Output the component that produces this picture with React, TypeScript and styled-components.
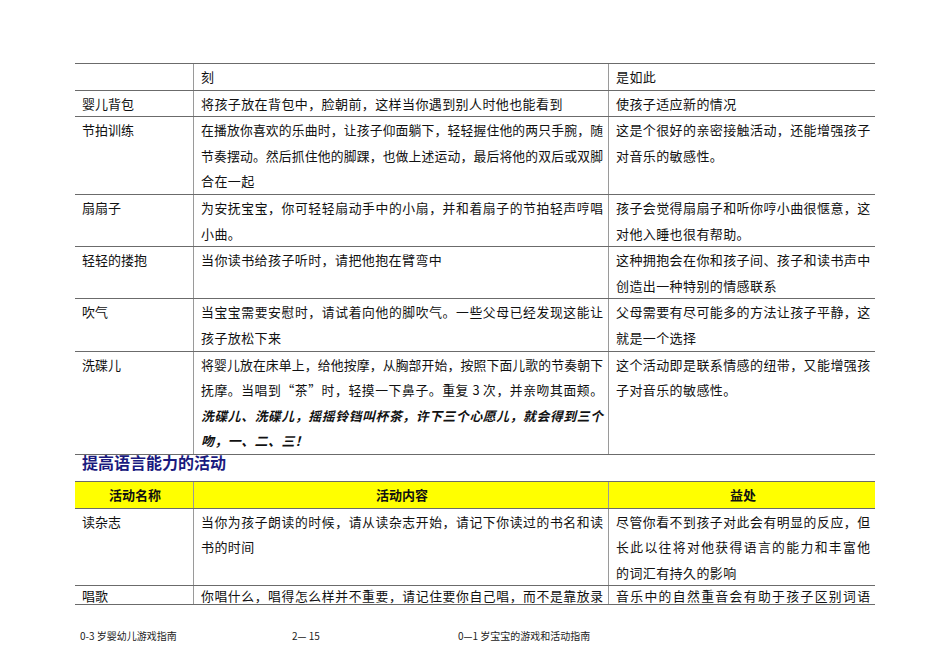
import React from "react";
import styled, { createGlobalStyle } from "styled-components";

const GlobalStyle = createGlobalStyle`
  html, body { margin: 0; padding: 0; background: #ffffff; }
  body { font-family: "Noto Sans CJK SC", "Liberation Sans", sans-serif; color: #111; }
`;

const COLS = "118px 415px 267px";

const Page = styled.div`
  width: 950px;
  height: 672px;
  box-sizing: border-box;
  padding: 63px 0 0 75px;
  overflow: hidden;
`;

const Table = styled.div`
  width: 800px;
  border-top: 1px solid #6b6b6b;
`;

const Row = styled.div<{ $head?: boolean }>`
  display: grid;
  grid-template-columns: ${COLS};
  border-bottom: 1px solid #6b6b6b;
  background: ${(p) => (p.$head ? "#ffff00" : "transparent")};
`;

const Cell = styled.div<{ $divider?: boolean; $head?: boolean; $clip?: boolean }>`
  padding: ${(p) => (p.$clip ? "1px 5px 0 7px" : "0 5px 0 7px")};
  border-left: ${(p) => (p.$divider ? "1px solid #9a9a9a" : "none")};
  font-size: 13px;
  line-height: ${(p) => (p.$clip ? "17px" : "25.6px")};
  text-align: ${(p) => (p.$head ? "center" : "left")};
  font-weight: ${(p) => (p.$head ? 700 : 400)};
`;

const Line = styled.div<{ $full?: boolean; $em?: boolean }>`
  white-space: nowrap;
  letter-spacing: ${(p) => (p.$full ? "0" : "0.4px")};
  font-size: ${(p) => (p.$full ? "12.8px" : "13px")};
  text-align: ${(p) => (p.$full ? "justify" : "left")};
  text-align-last: ${(p) => (p.$full ? "justify" : "left")};
  font-style: ${(p) => (p.$em ? "italic" : "normal")};
  font-weight: ${(p) => (p.$em ? 700 : "inherit")};
`;

const Heading = styled.h2`
  margin: 0;
  height: 26px;
  padding-left: 7px;
  font-size: 16px;
  line-height: 15px;
  font-weight: 700;
  color: #1a1a7e;
  font-family: "Noto Sans CJK SC", "Liberation Sans", sans-serif;
`;

const Footer = styled.div`
  display: grid;
  grid-template-columns: 212px 166px auto;
  padding: 24px 0 0 5px;
  font-size: 10px;
  line-height: 14px;
  color: #222;
`;

type L = { t: string; full?: boolean; em?: boolean };
type RowData = { name: string; content: L[]; benefit: L[] };

const rows1: RowData[] = [
  { name: "", content: [{ t: "刻" }], benefit: [{ t: "是如此" }] },
  {
    name: "婴儿背包",
    content: [{ t: "将孩子放在背包中，脸朝前，这样当你遇到别人时他也能看到" }],
    benefit: [{ t: "使孩子适应新的情况" }],
  },
  {
    name: "节拍训练",
    content: [
      { t: "在播放你喜欢的乐曲时，让孩子仰面躺下，轻轻握住他的两只手腕，随", full: true },
      { t: "节奏摆动。然后抓住他的脚踝，也做上述运动，最后将他的双后或双脚", full: true },
      { t: "合在一起" },
    ],
    benefit: [
      { t: "这是个很好的亲密接触活动，还能增强孩子" },
      { t: "对音乐的敏感性。" },
    ],
  },
  {
    name: "扇扇子",
    content: [
      { t: "为安抚宝宝，你可轻轻扇动手中的小扇，并和着扇子的节拍轻声哼唱", full: true },
      { t: "小曲。" },
    ],
    benefit: [
      { t: "孩子会觉得扇扇子和听你哼小曲很惬意，这" },
      { t: "对他入睡也很有帮助。" },
    ],
  },
  {
    name: "轻轻的搂抱",
    content: [{ t: "当你读书给孩子听时，请把他抱在臂弯中" }],
    benefit: [
      { t: "这种拥抱会在你和孩子间、孩子和读书声中" },
      { t: "创造出一种特别的情感联系" },
    ],
  },
  {
    name: "吹气",
    content: [
      { t: "当宝宝需要安慰时，请试着向他的脚吹气。一些父母已经发现这能让", full: true },
      { t: "孩子放松下来" },
    ],
    benefit: [
      { t: "父母需要有尽可能多的方法让孩子平静，这" },
      { t: "就是一个选择" },
    ],
  },
  {
    name: "洗碟儿",
    content: [
      { t: "将婴儿放在床单上，给他按摩，从胸部开始，按照下面儿歌的节奏朝下", full: true },
      { t: "抚摩。当唱到“茶”时，轻摸一下鼻子。重复 3 次，并亲吻其面颊。", full: true },
      { t: "洗碟儿、洗碟儿，摇摇铃铛叫杯茶，许下三个心愿儿，就会得到三个", full: true, em: true },
      { t: "吻，一、二、三！", em: true },
    ],
    benefit: [
      { t: "这个活动即是联系情感的纽带，又能增强孩" },
      { t: "子对音乐的敏感性。" },
    ],
  },
];

const rows2: RowData[] = [
  {
    name: "读杂志",
    content: [
      { t: "当你为孩子朗读的时候，请从读杂志开始，请记下你读过的书名和读", full: true },
      { t: "书的时间" },
    ],
    benefit: [
      { t: "尽管你看不到孩子对此会有明显的反应，但", full: true },
      { t: "长此以往将对他获得语言的能力和丰富他", full: true },
      { t: "的词汇有持久的影响" },
    ],
  },
];

const Lines: React.FC<{ items: L[] }> = ({ items }) => (
  <>
    {items.map((l, i) => (
      <Line key={i} $full={l.full} $em={l.em}>
        {l.t}
      </Line>
    ))}
  </>
);

const DataRow: React.FC<{ r: RowData }> = ({ r }) => (
  <Row>
    <Cell>{r.name}</Cell>
    <Cell $divider>
      <Lines items={r.content} />
    </Cell>
    <Cell $divider>
      <Lines items={r.benefit} />
    </Cell>
  </Row>
);

export default function App() {
  return (
    <>
      <GlobalStyle />
      <Page>
        <Table>
          {rows1.map((r, i) => (
            <DataRow key={i} r={r} />
          ))}
        </Table>
        <Heading>提高语言能力的活动</Heading>
        <Table>
          <Row $head>
            <Cell $head>活动名称</Cell>
            <Cell $head $divider>活动内容</Cell>
            <Cell $head $divider>益处</Cell>
          </Row>
          {rows2.map((r, i) => (
            <DataRow key={i} r={r} />
          ))}
          <Row>
            <Cell $clip>唱歌</Cell>
            <Cell $clip $divider>
              <Line $full>你唱什么，唱得怎么样并不重要，请记住要你自己唱，而不是靠放录</Line>
            </Cell>
            <Cell $clip $divider>
              <Line $full>音乐中的自然重音会有助于孩子区别词语</Line>
            </Cell>
          </Row>
        </Table>
        <Footer>
          <span>0-3 岁婴幼儿游戏指南</span>
          <span>2— 15</span>
          <span>0—1 岁宝宝的游戏和活动指南</span>
        </Footer>
      </Page>
    </>
  );
}
